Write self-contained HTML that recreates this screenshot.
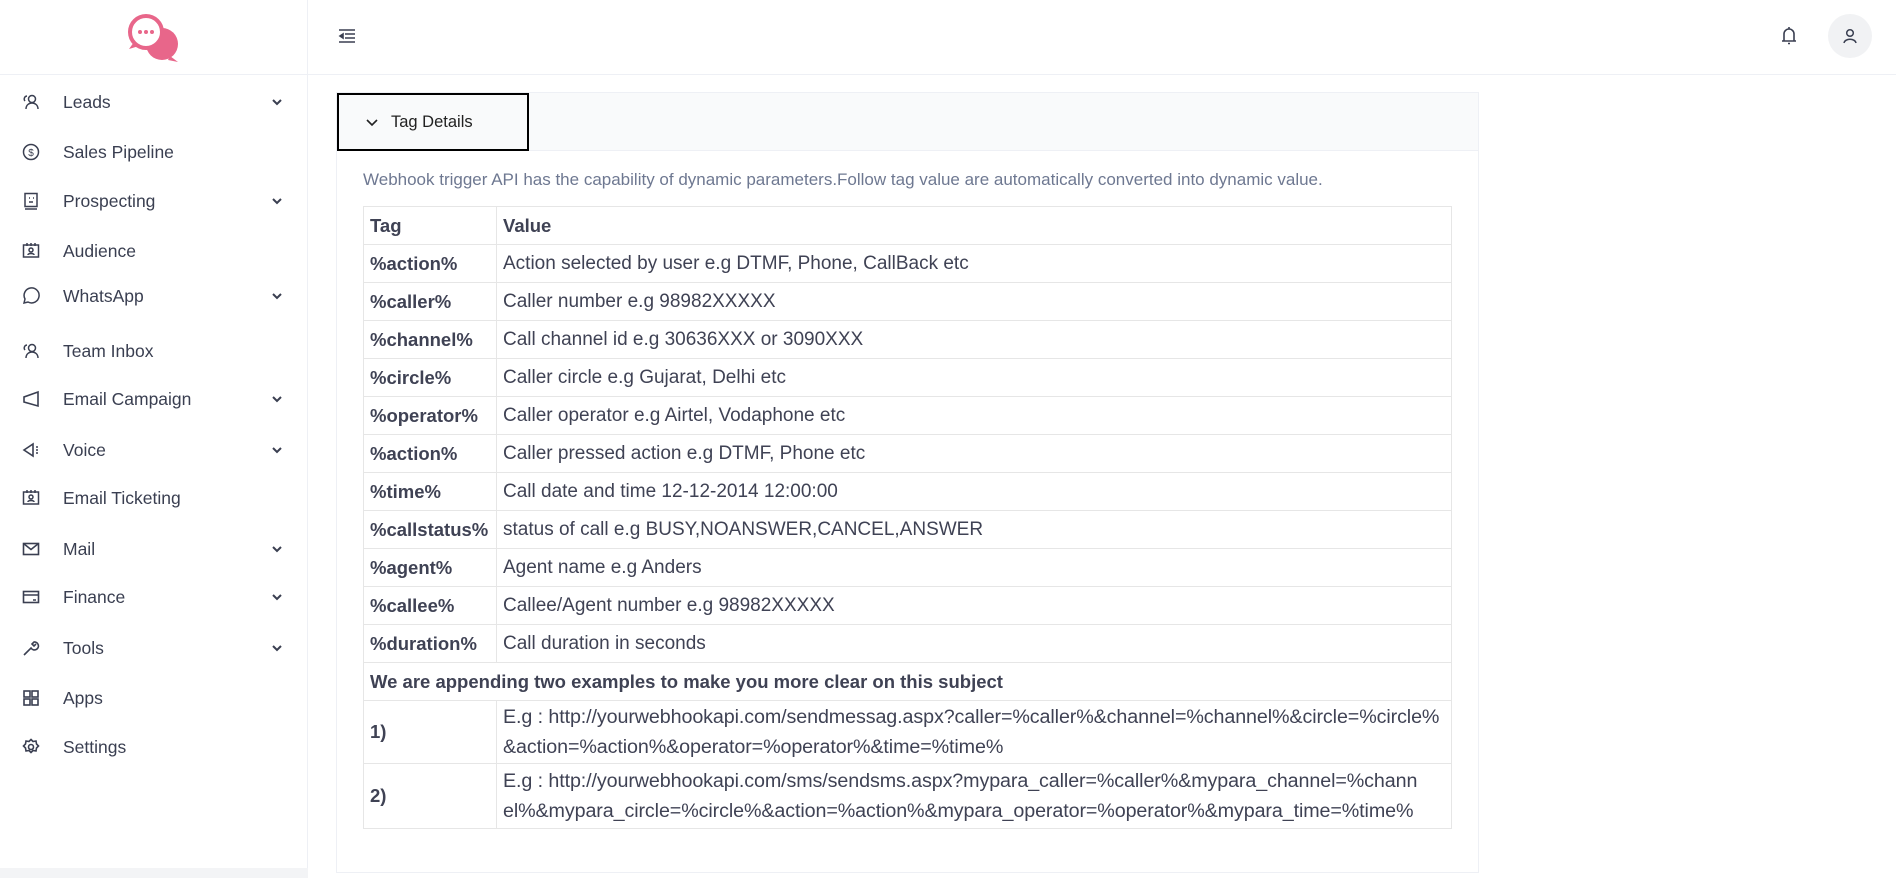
<!DOCTYPE html>
<html><head><meta charset="utf-8"><style>
*{box-sizing:border-box;margin:0;padding:0}
body{width:1896px;height:878px;overflow:hidden;background:#fff;font-family:"Liberation Sans",sans-serif;color:#3f4254;position:relative}
.side{position:absolute;left:0;top:0;width:308px;height:878px;border-right:1px solid #eef0f5;background:#fff}
.side .logo{height:75px;border-bottom:1px solid #eef0f5}
.item{position:absolute;left:0;width:308px;height:30px;display:flex;align-items:center;font-size:17.5px;color:#3a3f51}
.item svg.ic{position:absolute;left:22px;width:18px;height:18px}
.item span{position:absolute;left:63px}
.item .chev{position:absolute;left:271px;width:12px;height:12px}
.hdr{position:absolute;left:308px;top:0;right:0;height:75px;border-bottom:1px solid #eef0f5}
.card{position:absolute;left:336px;top:92px;width:1143px;height:781px;border:1px solid #eef0f5}
.chead{height:58px;background:#f9fafb;border-bottom:1px solid #eef0f5}
.btn{position:absolute;left:0;top:0;width:192px;height:58px;border:2px solid #000;background:#f9fafb;font-size:16.5px;color:#222}
.desc{position:absolute;left:363px;top:170px;font-size:17px;color:#6e7891}
table{position:absolute;left:363px;top:206px;width:1089px;border-collapse:collapse;font-size:19px;color:#3f4254}
td{border:1px solid #e6e6e6;padding:0 6px;height:38px;vertical-align:middle;white-space:nowrap;line-height:22px}
td.t{font-weight:bold;width:133px;font-size:18.5px}
td.l{line-height:30px;font-size:19.7px;letter-spacing:-0.1px}
</style></head><body>
<div class="side"><div class="logo">
<svg style="position:absolute;left:126px;top:12px" width="56" height="52" viewBox="0 0 56 52"><circle cx="36" cy="32" r="16" fill="#e8668a"/><path d="M44 44 L52 50 L42 48Z" fill="#e8668a"/><circle cx="20" cy="20" r="16" fill="#fff" stroke="#e8668a" stroke-width="4"/><path d="M8 30 L3 37 L13 34Z" fill="#e8668a"/><circle cx="14" cy="20" r="2" fill="#e8668a"/><circle cx="20" cy="20" r="2" fill="#e8668a"/><circle cx="26" cy="20" r="2" fill="#e8668a"/></svg>
</div></div>
<div class="item" style="top:87px"><svg class="ic" viewBox="0 0 18 18" fill="none" stroke="#3a3f51" stroke-width="1.5"><circle cx="10" cy="6" r="3.5"/><path d="M4 16c0-4 3-6 6-6s6 2 6 6M5 3a3 3 0 0 0-2 5"/></svg><span>Leads</span><svg class="chev" viewBox="0 0 12 12" fill="none" stroke="#3a3f51" stroke-width="2"><path d="M2 4l4 4 4-4"/></svg></div>
<div class="item" style="top:137px"><svg class="ic" viewBox="0 0 18 18" fill="none" stroke="#3a3f51" stroke-width="1.5"><circle cx="9" cy="9" r="7.5"/><text x="9" y="13" font-size="10" text-anchor="middle" fill="#3a3f51" stroke="none">$</text></svg><span>Sales Pipeline</span></div>
<div class="item" style="top:186px"><svg class="ic" viewBox="0 0 18 18" fill="none" stroke="#3a3f51" stroke-width="1.5"><rect x="3" y="1.5" width="12" height="13"/><path d="M3 17h12M7 6h1M11 6h1M7 10h4"/></svg><span>Prospecting</span><svg class="chev" viewBox="0 0 12 12" fill="none" stroke="#3a3f51" stroke-width="2"><path d="M2 4l4 4 4-4"/></svg></div>
<div class="item" style="top:236px"><svg class="ic" viewBox="0 0 18 18" fill="none" stroke="#3a3f51" stroke-width="1.5"><rect x="1.5" y="3" width="15" height="12"/><circle cx="9" cy="8" r="2"/><path d="M6 13c0-2 6-2 6 0M5 1v3M9 1v3M13 1v3"/></svg><span>Audience</span></div>
<div class="item" style="top:281px"><svg class="ic" viewBox="0 0 18 18" fill="none" stroke="#3a3f51" stroke-width="1.5"><path d="M2 16l1-4a7.5 7.5 0 1 1 3 3z"/></svg><span>WhatsApp</span><svg class="chev" viewBox="0 0 12 12" fill="none" stroke="#3a3f51" stroke-width="2"><path d="M2 4l4 4 4-4"/></svg></div>
<div class="item" style="top:336px"><svg class="ic" viewBox="0 0 18 18" fill="none" stroke="#3a3f51" stroke-width="1.5"><circle cx="10" cy="6" r="3.5"/><path d="M4 16c0-4 3-6 6-6s6 2 6 6M5 3a3 3 0 0 0-2 5"/></svg><span>Team Inbox</span></div>
<div class="item" style="top:384px"><svg class="ic" viewBox="0 0 18 18" fill="none" stroke="#3a3f51" stroke-width="1.6"><path d="M2 7v5l14 4V2z"/></svg><span>Email Campaign</span><svg class="chev" viewBox="0 0 12 12" fill="none" stroke="#3a3f51" stroke-width="2"><path d="M2 4l4 4 4-4"/></svg></div>
<div class="item" style="top:435px"><svg class="ic" viewBox="0 0 18 18" fill="none" stroke="#3a3f51" stroke-width="1.6"><path d="M2 9l9-6v12zM14 6h2M14 9h2M14 12h2"/></svg><span>Voice</span><svg class="chev" viewBox="0 0 12 12" fill="none" stroke="#3a3f51" stroke-width="2"><path d="M2 4l4 4 4-4"/></svg></div>
<div class="item" style="top:483px"><svg class="ic" viewBox="0 0 18 18" fill="none" stroke="#3a3f51" stroke-width="1.5"><rect x="1.5" y="3" width="15" height="12"/><circle cx="9" cy="8" r="2"/><path d="M6 13c0-2 6-2 6 0M5 1v3M9 1v3M13 1v3"/></svg><span>Email Ticketing</span></div>
<div class="item" style="top:534px"><svg class="ic" viewBox="0 0 18 18" fill="none" stroke="#3a3f51" stroke-width="1.6"><rect x="1.5" y="3.5" width="15" height="11"/><path d="M1.5 3.5l7.5 6 7.5-6"/></svg><span>Mail</span><svg class="chev" viewBox="0 0 12 12" fill="none" stroke="#3a3f51" stroke-width="2"><path d="M2 4l4 4 4-4"/></svg></div>
<div class="item" style="top:582px"><svg class="ic" viewBox="0 0 18 18" fill="none" stroke="#3a3f51" stroke-width="1.6"><rect x="1.5" y="3.5" width="15" height="11"/><path d="M1.5 7h15M11 12h3"/></svg><span>Finance</span><svg class="chev" viewBox="0 0 12 12" fill="none" stroke="#3a3f51" stroke-width="2"><path d="M2 4l4 4 4-4"/></svg></div>
<div class="item" style="top:633px"><svg class="ic" viewBox="0 0 18 18" fill="none" stroke="#3a3f51" stroke-width="1.6"><path d="M2 16l7-7a4 4 0 1 0 3-6l-2 2 2 2 2-2"/></svg><span>Tools</span><svg class="chev" viewBox="0 0 12 12" fill="none" stroke="#3a3f51" stroke-width="2"><path d="M2 4l4 4 4-4"/></svg></div>
<div class="item" style="top:683px"><svg class="ic" viewBox="0 0 18 18" fill="none" stroke="#3a3f51" stroke-width="1.6"><rect x="2" y="2" width="6" height="6"/><rect x="10" y="2" width="6" height="6"/><rect x="2" y="10" width="6" height="6"/><rect x="10" y="10" width="6" height="6"/></svg><span>Apps</span></div>
<div class="item" style="top:732px"><svg class="ic" viewBox="0 0 18 18" fill="none" stroke="#3a3f51" stroke-width="1.6"><circle cx="9" cy="9" r="2.5"/><path d="M9 1.5l2 2 3-.5.5 3 2 2-2 2-.5 3-3-.5-2 2-2-2-3 .5-.5-3-2-2 2-2 .5-3 3 .5z"/></svg><span>Settings</span></div>
<div style="position:absolute;left:0;top:868px;width:308px;height:10px;background:#f3f4f6"></div>
<div class="hdr">
<svg style="position:absolute;left:30px;top:28px" width="18" height="16" viewBox="0 0 18 16" fill="none" stroke="#3a3f51" stroke-width="1.6"><path d="M1 2h16M7 6h10M7 10h10M1 14h16"/><path d="M5 6l-3 2 3 2z" fill="#3a3f51"/></svg>
<svg style="position:absolute;left:1473px;top:26px" width="16" height="20" viewBox="0 0 16 20" fill="none" stroke="#3a3f51" stroke-width="1.6"><path d="M3 15V8a5 5 0 0 1 10 0v7zM1 15h14M7 17.5h2M8 1v2"/></svg>
<div style="position:absolute;left:1520px;top:14px;width:44px;height:44px;border-radius:50%;background:#f1f2f4"></div>
<svg style="position:absolute;left:1534px;top:28px" width="16" height="16" viewBox="0 0 16 16" fill="none" stroke="#3a3f51" stroke-width="1.5"><circle cx="8" cy="5" r="3.3"/><path d="M2 15c1-5 11-5 12 0"/></svg>
</div>
<div class="card"><div class="chead"></div>
<div class="btn"><svg style="position:absolute;left:27px;top:24px" width="12" height="8" viewBox="0 0 12 8" fill="none" stroke="#222" stroke-width="1.6"><path d="M1 1l5 5 5-5"/></svg><span style="position:absolute;left:52px;top:18px">Tag Details</span></div>
</div>
<div class="desc">Webhook trigger API has the capability of dynamic parameters.Follow tag value are automatically converted into dynamic value.</div>
<table>
<tr><td class="t">Tag</td><td style="font-weight:bold;font-size:18.5px">Value</td></tr>
<tr><td class="t">%action%</td><td>Action selected by user e.g DTMF, Phone, CallBack etc</td></tr>
<tr><td class="t">%caller%</td><td>Caller number e.g 98982XXXXX</td></tr>
<tr><td class="t">%channel%</td><td>Call channel id e.g 30636XXX or 3090XXX</td></tr>
<tr><td class="t">%circle%</td><td>Caller circle e.g Gujarat, Delhi etc</td></tr>
<tr><td class="t">%operator%</td><td>Caller operator e.g Airtel, Vodaphone etc</td></tr>
<tr><td class="t">%action%</td><td>Caller pressed action e.g DTMF, Phone etc</td></tr>
<tr><td class="t">%time%</td><td>Call date and time 12-12-2014 12:00:00</td></tr>
<tr><td class="t">%callstatus%</td><td>status of call e.g BUSY,NOANSWER,CANCEL,ANSWER</td></tr>
<tr><td class="t">%agent%</td><td>Agent name e.g Anders</td></tr>
<tr><td class="t">%callee%</td><td>Callee/Agent number e.g 98982XXXXX</td></tr>
<tr><td class="t">%duration%</td><td>Call duration in seconds</td></tr>
<tr><td colspan="2" style="font-weight:bold;font-size:18.5px">We are appending two examples to make you more clear on this subject</td></tr>
<tr><td class="t" style="height:63px">1)</td><td class="l">E.g : http://yourwebhookapi.com/sendmessag.aspx?caller=%caller%&amp;channel=%channel%&amp;circle=%circle%<br>&amp;action=%action%&amp;operator=%operator%&amp;time=%time%</td></tr>
<tr><td class="t" style="height:65px">2)</td><td class="l">E.g : http://yourwebhookapi.com/sms/sendsms.aspx?mypara_caller=%caller%&amp;mypara_channel=%chann<br>el%&amp;mypara_circle=%circle%&amp;action=%action%&amp;mypara_operator=%operator%&amp;mypara_time=%time%</td></tr>
</table>
</body></html>
